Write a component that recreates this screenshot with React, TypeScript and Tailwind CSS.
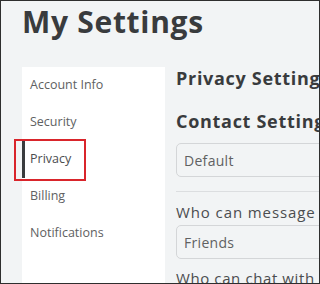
import React from "react";

const NAV = ["Account Info", "Security", "Privacy", "Billing", "Notifications"];

export default function App() {
  return (
    <div
      className="relative w-[320px] h-[284px] overflow-hidden border border-[#2e2e2e] bg-[#f2f4f5] text-[#393b3d]"
      style={{ fontFamily: '"Open Sans", "Noto Sans", sans-serif' }}
    >
      {/* Page title */}
      <h1 className="pl-[21px] pt-[1px] text-[30px] font-bold leading-[40px] tracking-[0.7px]">
        My Settings
      </h1>

      <div className="mt-[25px] flex">
        {/* Side nav */}
        <nav className="ml-[21px] w-[143px] shrink-0 bg-white">
          {NAV.map((item) => (
            <div
              key={item}
              className={
                item === "Privacy"
                  ? "flex h-[37px] items-center border-l-[3px] border-[#393b3d] pl-[5px] text-[12.5px] text-[#4b4d4f]"
                  : "flex h-[37px] items-center pl-[8px] text-[12.5px] text-[#606162]"
              }
            >
              {item}
            </div>
          ))}
        </nav>

        {/* Settings content */}
        <div className="ml-[11px] w-[240px] shrink-0">
          <h2 className="mt-[1px] text-[18px] font-bold leading-[20px] tracking-[0.7px]">Privacy Settings</h2>
          <h2 className="mt-[21px] text-[18px] font-bold leading-[24px] tracking-[0.7px]">Contact Settings</h2>
          <div className="mt-[10px] flex h-[34px] items-center rounded-[5px] border border-[#d4d6d8] bg-[#f2f4f5] pl-[7px] text-[14px] tracking-[0.3px] text-[#606162]">
            Default
          </div>
          <div className="mt-[14px] border-t border-[#dcdee0]" />
          <div className="mt-[11px] text-[15px] leading-[18px] tracking-[0.9px] text-[#4b4d4f]">Who can message me?</div>
          <div className="mt-[4px] flex h-[34px] items-center rounded-[5px] border border-[#d4d6d8] bg-[#f2f4f5] pl-[7px] text-[14px] tracking-[0.3px] text-[#606162]">
            Friends
          </div>
          <div className="mt-[10px] text-[15px] leading-[18px] tracking-[0.6px] text-[#4b4d4f]">Who can chat with me?</div>
        </div>
      </div>

      {/* Highlight annotation */}
      <div className="absolute left-[13px] top-[138px] h-[42px] w-[72px] border-2 border-[#d9252b]" />
    </div>
  );
}
